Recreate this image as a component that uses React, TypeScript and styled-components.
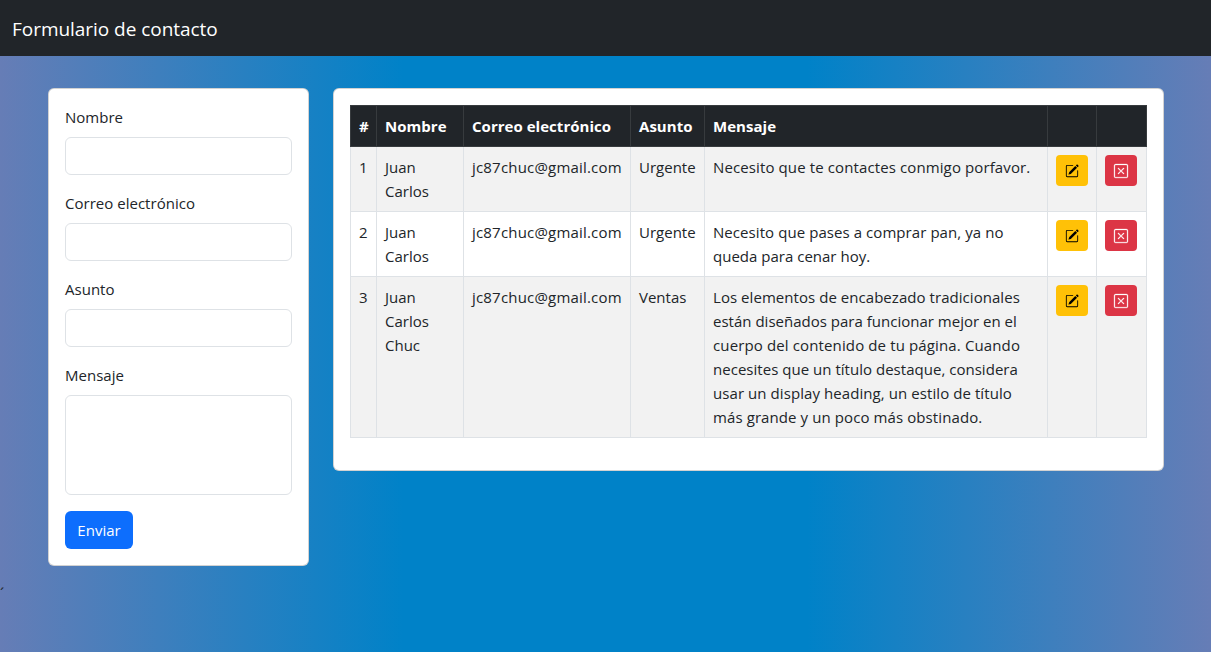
import React from 'react';
import styled, { createGlobalStyle } from 'styled-components';
import { BsPencilSquare, BsXSquare } from 'react-icons/bs';

const GlobalStyle = createGlobalStyle`
  *, *::before, *::after { box-sizing: border-box; }
  body {
    margin: 0;
    min-height: 100vh;
    font-family: 'Open Sans', 'Noto Sans', sans-serif;
    font-size: 15px;
    line-height: 24px;
    color: #212529;
    background: linear-gradient(to right, #667db6, #0082c8, #0082c8, #667db6);
  }
`;

const Navbar = styled.nav`
  display: flex;
  align-items: center;
  height: 56px;
  padding: 2px 12px 0;
  background: #212529;
`;

const Brand = styled.span`
  color: #fff;
  font-size: 19px;
  line-height: 30px;
  letter-spacing: -0.04px;
  white-space: nowrap;
`;

const Columns = styled.main`
  display: flex;
  align-items: flex-start;
  gap: 24px;
  padding: 32px 47px 15px 48px;
`;

const Card = styled.section<{ $width: number }>`
  flex: none;
  width: ${(p) => p.$width}px;
  padding: 16px;
  background: #fff;
  border: 1px solid rgba(0, 0, 0, 0.176);
  border-radius: 6px;
`;

const Field = styled.div`
  margin-bottom: 16px;
`;

const Label = styled.label`
  display: block;
  margin-bottom: 8px;
  letter-spacing: 0.02px;
`;

const Input = styled.input`
  display: block;
  width: 100%;
  height: 38px;
  padding: 6px 12px;
  font: inherit;
  background: #fff;
  border: 1px solid #dee2e6;
  border-radius: 6px;
`;

const TextArea = styled(Input).attrs({ as: 'textarea' })`
  height: 100px;
  resize: none;
`;

const SubmitButton = styled.button`
  display: block;
  width: 68px;
  height: 38px;
  padding: 0 0 1px;
  font: inherit;
  color: #fff;
  background: #0d6efd;
  border: 0;
  border-radius: 6px;
`;

const Table = styled.table`
  width: 797px;
  margin-bottom: 16px;
  table-layout: fixed;
  border-collapse: collapse;
`;

const HeadCell = styled.th`
  padding: 8px;
  text-align: left;
  font-weight: 700;
  letter-spacing: 0.03px;
  white-space: nowrap;
  color: #fff;
  background: #212529;
  border: 1px solid #373b3e;
`;

const Row = styled.tr`
  &:nth-child(odd) td { background: #f2f2f2; }
`;

const Cell = styled.td`
  padding: 8px;
  vertical-align: top;
  background: #fff;
  border: 1px solid #dee2e6;
`;

const Line = styled.div<{ $track?: number }>`
  white-space: nowrap;
  letter-spacing: ${(p) => p.$track ?? 0}px;
`;

const IconButton = styled.button<{ $danger?: boolean }>`
  display: flex;
  align-items: center;
  justify-content: center;
  width: 32px;
  height: 31px;
  padding: 1px 0 0;
  border: 0;
  border-radius: 4px;
  font-size: 14px;
  color: ${(p) => (p.$danger ? '#fff' : '#000')};
  background: ${(p) => (p.$danger ? '#dc3545' : '#ffc107')};

  svg {
    overflow: visible;
    stroke-width: ${(p) => (p.$danger ? 0.3 : 0)};
  }
`;

const StrayMark = styled.div`
  height: 24px;
`;

const columnWidths = [26, 87, 167, 74, 343, 49, 50];
const headings = ['#', 'Nombre', 'Correo electrónico', 'Asunto', 'Mensaje', '', ''];

type TrackedLine = [text: string, track: number];

const messages: { name: string[]; subject: string; body: TrackedLine[] }[] = [
  {
    name: ['Juan', 'Carlos'],
    subject: 'Urgente',
    body: [['Necesito que te contactes conmigo porfavor.', 0.115]],
  },
  {
    name: ['Juan', 'Carlos'],
    subject: 'Urgente',
    body: [
      ['Necesito que pases a comprar pan, ya no', 0.07],
      ['queda para cenar hoy.', 0.01],
    ],
  },
  {
    name: ['Juan', 'Carlos', 'Chuc'],
    subject: 'Ventas',
    body: [
      ['Los elementos de encabezado tradicionales', 0.05],
      ['están diseñados para funcionar mejor en el', 0.01],
      ['cuerpo del contenido de tu página. Cuando', 0.13],
      ['necesites que un título destaque, considera', 0.025],
      ['usar un display heading, un estilo de título', 0.075],
      ['más grande y un poco más obstinado.', 0.095],
    ],
  },
];

export default function App() {
  return (
    <>
      <GlobalStyle />
      <Navbar>
        <Brand>Formulario de contacto</Brand>
      </Navbar>
      <Columns>
        <Card as="form" $width={261}>
          {['Nombre', 'Correo electrónico', 'Asunto'].map((label) => (
            <Field key={label}>
              <Label>{label}</Label>
              <Input aria-label={label} />
            </Field>
          ))}
          <Field>
            <Label>Mensaje</Label>
            <TextArea aria-label="Mensaje" />
          </Field>
          <SubmitButton type="button">Enviar</SubmitButton>
        </Card>
        <Card $width={831}>
          <Table>
            <colgroup>
              {columnWidths.map((width, i) => (
                <col key={i} width={width} />
              ))}
            </colgroup>
            <thead>
              <tr>
                {headings.map((heading, i) => (
                  <HeadCell key={i}>{heading}</HeadCell>
                ))}
              </tr>
            </thead>
            <tbody>
              {messages.map((message, i) => (
                <Row key={i}>
                  <Cell>{i + 1}</Cell>
                  <Cell>
                    {message.name.map((line) => (
                      <Line key={line}>{line}</Line>
                    ))}
                  </Cell>
                  <Cell>
                    <Line $track={0.19}>jc87chuc@gmail.com</Line>
                  </Cell>
                  <Cell>
                    <Line>{message.subject}</Line>
                  </Cell>
                  <Cell>
                    {message.body.map(([text, track]) => (
                      <Line key={text} $track={track}>
                        {text}
                      </Line>
                    ))}
                  </Cell>
                  <Cell>
                    <IconButton>
                      <BsPencilSquare />
                    </IconButton>
                  </Cell>
                  <Cell>
                    <IconButton $danger>
                      <BsXSquare />
                    </IconButton>
                  </Cell>
                </Row>
              ))}
            </tbody>
          </Table>
        </Card>
      </Columns>
      <StrayMark>´</StrayMark>
    </>
  );
}
